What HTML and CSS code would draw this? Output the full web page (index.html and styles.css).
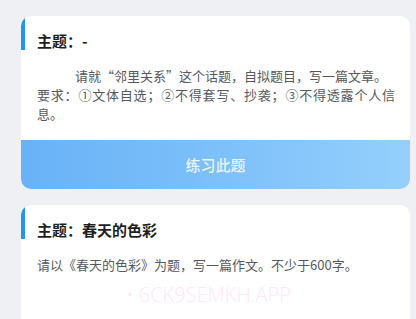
FILE: index.html
```html
<!DOCTYPE html>
<html lang="zh-CN">
<head>
<meta charset="utf-8">
<link rel="stylesheet" href="styles.css">
</head>
<body>
<div class="list">
  <div class="card">
    <div class="card-body">
      <div class="title">主题：-</div>
      <p class="desc indent">请就“邻里关系”这个话题，自拟题目，写一篇文章。<br>要求：①文体自选；②不得套写、抄袭；③不得透露个人信息。</p>
    </div>
    <div class="btn">练习此题</div>
  </div>
  <div class="card card-last">
    <div class="card-body">
      <div class="title">主题：春天的色彩</div>
      <p class="desc">请以《春天的色彩》为题，写一篇作文。不少于600字。</p>
    </div>
    <div class="watermark">• 6CK9SEMKH.APP</div>
  </div>
</div>
</body>
</html>
```

FILE: styles.css
```css
html, body {
  margin: 0;
  padding: 0;
  height: 100%;
  overflow: hidden;
}
body {
  background: #eef0f3;
  font-family: "Noto Sans CJK SC", sans-serif;
}
.list {
  display: flex;
  flex-direction: column;
  gap: 16px;
  padding: 16px 6px 0 21px;
}
.card {
  position: relative;
  background: #ffffff;
  border-radius: 10px;
  overflow: hidden;
}
.card::before {
  content: "";
  position: absolute;
  left: 0;
  top: 0;
  width: 4px;
  height: 34px;
  background: #2196f0;
}
.card-last {
  height: 114px;
  border-radius: 10px 10px 0 0;
}
.card-body {
  padding: 14px 15px 17px 16px;
}
.title {
  font-size: 15px;
  line-height: 22px;
  font-weight: 700;
  color: #1f1f1f;
}
.desc {
  margin: 14px 0 0 0;
  font-size: 13px;
  line-height: 19px;
  color: #55595f;
  text-align: justify;
}
.indent {
  text-indent: 38px;
}
.btn {
  height: 49px;
  display: flex;
  align-items: center;
  justify-content: center;
  background: linear-gradient(90deg, #68b2f7 0%, #7fc1fa 55%, #95d0fc 100%);
  color: rgba(255, 255, 255, 0.86);
  font-size: 15px;
  font-weight: 500;
}
.watermark {
  position: absolute;
  left: 105px;
  top: 76px;
  font-family: "Open Sans", sans-serif;
  font-size: 20px;
  font-weight: 300;
  color: #fde8f8;
  white-space: nowrap;
}
```
